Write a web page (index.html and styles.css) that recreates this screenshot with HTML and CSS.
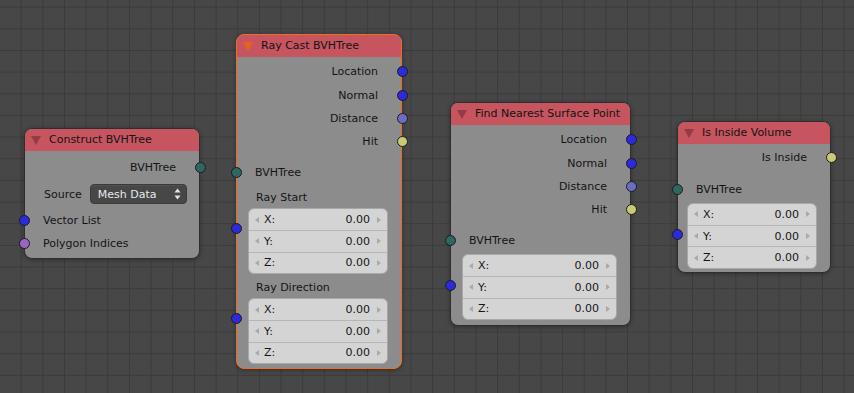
FILE: index.html
```html
<!DOCTYPE html>
<html>
<head>
<meta charset="utf-8">
<link rel="stylesheet" href="styles.css">
</head>
<body>
<div class="canvas">

  <div class="node n-construct">
    <div class="node-header"><span class="tri"></span><span class="title">Construct BVHTree</span></div>
    <div class="node-body">
      <div class="row out"><span>BVHTree</span><i class="sock s-tree"></i></div>
      <div class="row prop">
        <span>Source</span>
        <div class="dropdown"><span>Mesh Data</span>
          <svg class="updown" width="7" height="12" viewBox="0 0 7 12"><path d="M3.5 0.5 L6.5 4.5 L0.5 4.5 Z M3.5 11.5 L6.5 7.5 L0.5 7.5 Z" fill="#e6e6e6"/></svg>
        </div>
      </div>
      <div class="row in"><i class="sock s-vec"></i><span>Vector List</span></div>
      <div class="row in"><i class="sock s-int"></i><span>Polygon Indices</span></div>
    </div>
  </div>

  <div class="node n-raycast selected">
    <div class="node-header"><span class="tri"></span><span class="title">Ray Cast BVHTree</span></div>
    <div class="node-body">
      <div class="row out"><span>Location</span><i class="sock s-vec"></i></div>
      <div class="row out"><span>Normal</span><i class="sock s-vec"></i></div>
      <div class="row out"><span>Distance</span><i class="sock s-float"></i></div>
      <div class="row out"><span>Hit</span><i class="sock s-bool"></i></div>
      <div class="row in gap-before"><i class="sock s-tree"></i><span>BVHTree</span></div>
      <div class="vgroup labeled">
        <i class="sock s-vec vsock"></i>
        <div class="vlabel">Ray Start</div>
        <div class="vbox">
          <div class="vrow"><i class="arr l"></i><span class="axis">X:</span><span class="val">0.00</span><i class="arr r"></i></div>
          <div class="vrow"><i class="arr l"></i><span class="axis">Y:</span><span class="val">0.00</span><i class="arr r"></i></div>
          <div class="vrow"><i class="arr l"></i><span class="axis">Z:</span><span class="val">0.00</span><i class="arr r"></i></div>
        </div>
      </div>
      <div class="vgroup labeled">
        <i class="sock s-vec vsock"></i>
        <div class="vlabel">Ray Direction</div>
        <div class="vbox">
          <div class="vrow"><i class="arr l"></i><span class="axis">X:</span><span class="val">0.00</span><i class="arr r"></i></div>
          <div class="vrow"><i class="arr l"></i><span class="axis">Y:</span><span class="val">0.00</span><i class="arr r"></i></div>
          <div class="vrow"><i class="arr l"></i><span class="axis">Z:</span><span class="val">0.00</span><i class="arr r"></i></div>
        </div>
      </div>
    </div>
  </div>

  <div class="node n-nearest">
    <div class="node-header"><span class="tri"></span><span class="title">Find Nearest Surface Point</span></div>
    <div class="node-body">
      <div class="row out"><span>Location</span><i class="sock s-vec"></i></div>
      <div class="row out"><span>Normal</span><i class="sock s-vec"></i></div>
      <div class="row out"><span>Distance</span><i class="sock s-float"></i></div>
      <div class="row out"><span>Hit</span><i class="sock s-bool"></i></div>
      <div class="row in gap-before"><i class="sock s-tree"></i><span>BVHTree</span></div>
      <div class="vgroup plain">
        <i class="sock s-vec vsock"></i>
        <div class="vbox">
          <div class="vrow"><i class="arr l"></i><span class="axis">X:</span><span class="val">0.00</span><i class="arr r"></i></div>
          <div class="vrow"><i class="arr l"></i><span class="axis">Y:</span><span class="val">0.00</span><i class="arr r"></i></div>
          <div class="vrow"><i class="arr l"></i><span class="axis">Z:</span><span class="val">0.00</span><i class="arr r"></i></div>
        </div>
      </div>
    </div>
  </div>

  <div class="node n-inside">
    <div class="node-header"><span class="tri"></span><span class="title">Is Inside Volume</span></div>
    <div class="node-body">
      <div class="row out"><span>Is Inside</span><i class="sock s-bool"></i></div>
      <div class="row in gap-before2"><i class="sock s-tree"></i><span>BVHTree</span></div>
      <div class="vgroup plain">
        <i class="sock s-vec vsock"></i>
        <div class="vbox">
          <div class="vrow"><i class="arr l"></i><span class="axis">X:</span><span class="val">0.00</span><i class="arr r"></i></div>
          <div class="vrow"><i class="arr l"></i><span class="axis">Y:</span><span class="val">0.00</span><i class="arr r"></i></div>
          <div class="vrow"><i class="arr l"></i><span class="axis">Z:</span><span class="val">0.00</span><i class="arr r"></i></div>
        </div>
      </div>
    </div>
  </div>

</div>
</body>
</html>
```

FILE: styles.css
```css
* { box-sizing: border-box; margin: 0; padding: 0; }
html, body { width: 854px; height: 393px; overflow: hidden; }
body {
  background: #474747;
  font-family: "DejaVu Sans", sans-serif;
  font-size: 11px;
  color: #141414;
}
.canvas {
  position: relative;
  width: 854px;
  height: 393px;
  background-color: #474747;
  background-image:
    linear-gradient(to right, #3b3b3b 1px, transparent 1px),
    linear-gradient(to bottom, #3b3b3b 1px, transparent 1px);
  background-size: 21.667px 21.667px;
  background-position: -1px 6.67px;
}

/* nodes on free canvas */
.node {
  position: absolute;
  background: #8c8c8c;
  border: 1px solid #2e2e2e;
  border-radius: 8px;
  box-shadow: 0 1px 4px rgba(0,0,0,0.35);
}
.node.selected { border: 1.5px solid #ef6d1d; }
.n-construct { left: 24px; top: 128px; width: 176px; }
.n-raycast { left: 236px; top: 34px; width: 166px; }
.n-nearest { left: 450px; top: 102px; width: 181px; }
.n-inside { left: 677px; top: 121px; width: 154px; }

.node-header {
  height: 22px;
  background: #c6555f;
  border-radius: 7px 7px 0 0;
  display: flex;
  align-items: center;
  padding-left: 6px;
  gap: 8px;
  color: #141414;
}
.tri {
  width: 0; height: 0;
  border-left: 5px solid transparent;
  border-right: 5px solid transparent;
  border-top: 9px solid #933c45;
  margin-top: 1px;
}
.selected .tri { border-top-color: #e9621c; }
.title { line-height: 22px; }

.node-body {
  display: flex;
  flex-direction: column;
  padding-bottom: 5px;
}
.n-construct .node-body { padding-top: 5px; padding-bottom: 3px; }
.n-raycast .node-body { padding-top: 3px; padding-bottom: 4px; }
.n-nearest .node-body { padding-top: 3px; padding-bottom: 5px; }
.n-inside .node-body { padding-top: 1.5px; padding-bottom: 3px; }

.row {
  position: relative;
  height: 23.4px;
  display: flex;
  align-items: center;
}
.row.out { justify-content: flex-end; padding-right: 23px; }
.row.in { padding-left: 18px; }
.row.gap-before { margin-top: 7px; }
.row.gap-before2 { margin-top: 8.5px; }
.row.prop {
  height: 24px;
  margin: 3px 0 2px;
  padding: 0 12px 0 19px;
  gap: 8px;
}

.sock {
  position: absolute;
  width: 11px;
  height: 11px;
  border-radius: 50%;
  border: 1px solid #1c1c1c;
  top: 50%;
  margin-top: -5.5px;
}
.row.out .sock { right: -6.5px; }
.row.in .sock { left: -6.5px; }
.s-tree { background: #2f6661; }
.s-vec { background: #2b2bdb; }
.s-float { background: #6c6cc2; }
.s-bool { background: #c9c977; }
.s-int { background: #9c63c2; }

.dropdown {
  flex: 1;
  height: 20px;
  background: #474747;
  border: 1px solid #3a3a3a;
  border-radius: 4px;
  color: #e8e8e8;
  display: flex;
  align-items: center;
  justify-content: space-between;
  padding: 0 5px 0 7px;
  box-shadow: inset 0 1px 0 rgba(255,255,255,0.06);
}
.updown { display: block; }

/* vector inputs */
.vgroup { position: relative; }
.vgroup.plain { margin-top: 2px; }
.vgroup .vsock { position: absolute; left: -6.5px; margin-top: 0; }
.vgroup.labeled .vsock { top: 39px; }
.vgroup.plain .vsock { top: 26.5px; }
.n-inside .vgroup.plain .vsock { top: 26px; }
.vlabel {
  height: 24px;
  line-height: 13px;
  padding: 7.5px 0 0 19px;
}
.vbox {
  margin: 0 13px 0 11px;
  background: #d4d4d4;
  border: 1px solid #a8a8a8;
  border-radius: 6px;
  overflow: hidden;
}
.n-inside .vbox { margin-left: 9px; margin-right: 13px; }
.vrow {
  height: 21.33px;
  display: flex;
  align-items: center;
  padding: 0 6px;
  color: #161616;
}
.vrow + .vrow { border-top: 1px solid #b6b6b6; }
.axis { margin-left: 5px; }
.val { margin-left: auto; margin-right: 7px; }
.arr {
  width: 0; height: 0;
  border-top: 3.5px solid transparent;
  border-bottom: 3.5px solid transparent;
}
.arr.l { border-right: 4px solid #a9a9a9; }
.arr.r { border-left: 4px solid #a9a9a9; }
```
